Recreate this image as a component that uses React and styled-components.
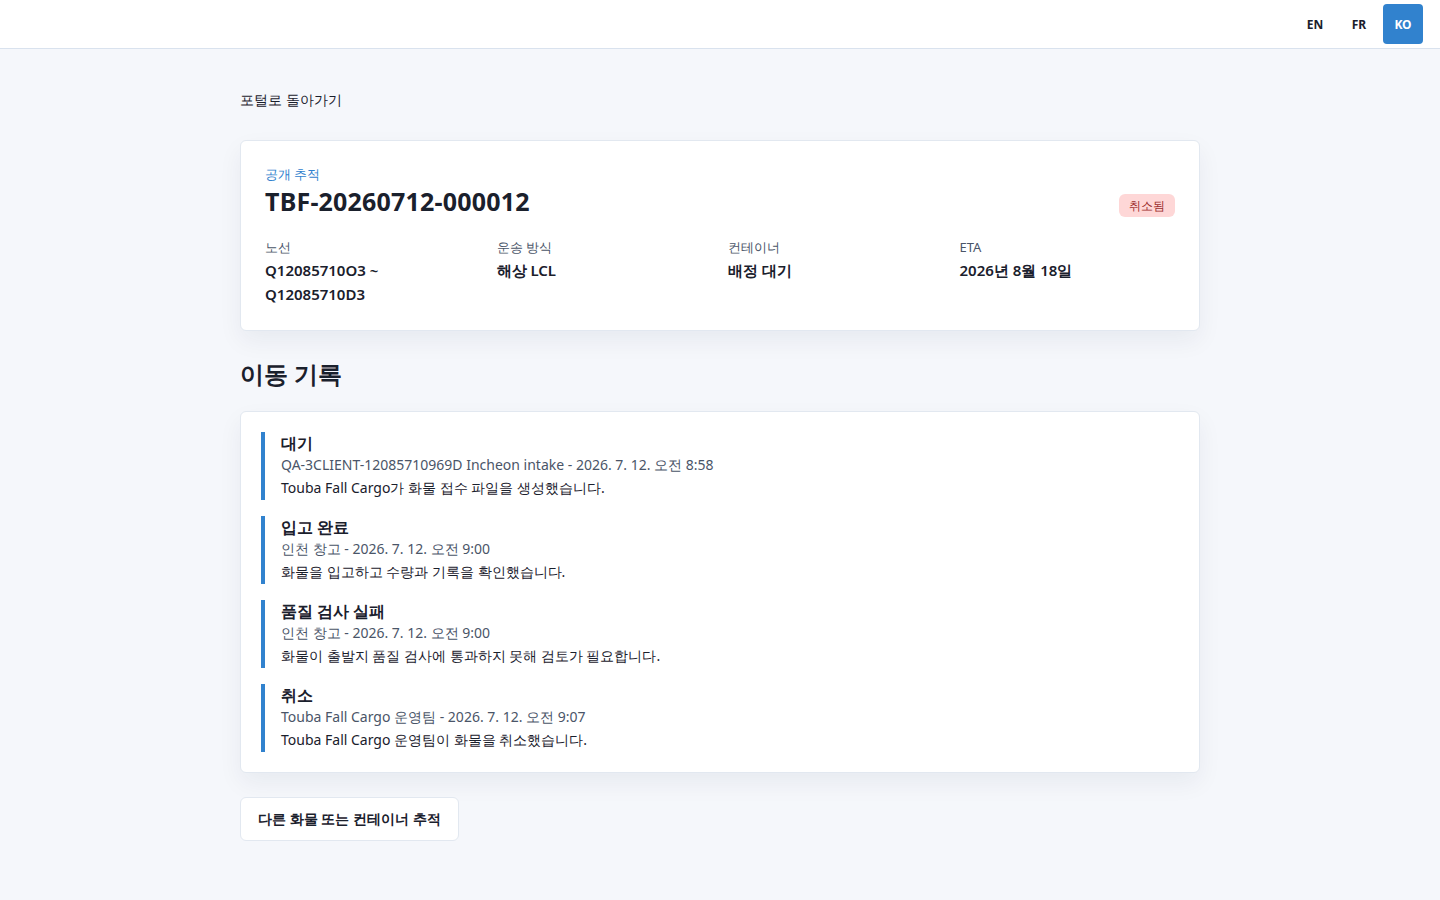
import React from 'react';
import styled, { createGlobalStyle } from 'styled-components';

const GlobalStyle = createGlobalStyle`
  body {
    margin: 0;
    background: #f5f7fb;
    font-family: "Noto Sans", sans-serif;
    color: #1a202c;
  }
  button {
    font: inherit;
  }
`;

const Header = styled.header`
  height: 48px;
  background: #fff;
  border-bottom: 1px solid #d9e2ee;
  display: flex;
  align-items: center;
  justify-content: flex-end;
  padding: 0 17px 0 16px;
  gap: 4px;
`;

const LangButton = styled.button`
  height: 40px;
  min-width: 40px;
  padding: 0 10px;
  border: none;
  border-radius: 4px;
  font-size: 12px;
  font-weight: 700;
  cursor: pointer;
  background: ${p => (p.active ? '#3182ce' : 'transparent')};
  color: ${p => (p.active ? '#fff' : '#1a202c')};
`;

const Main = styled.main`
  width: 960px;
  margin: 0 auto;
  padding: 39px 0 60px;
`;

const BackLink = styled.a`
  display: inline-block;
  font-size: 14px;
  font-weight: 500;
  color: #1a202c;
  text-decoration: none;
  line-height: 24px;
  margin-bottom: 28px;
`;

const Card = styled.section`
  background: #fff;
  border: 1px solid #e2e8f0;
  border-radius: 6px;
  box-shadow: 0 10px 25px rgba(20, 30, 60, 0.06);
  padding: ${p => p.pad || '24px'};
`;

const SummaryTop = styled.div`
  display: flex;
  justify-content: space-between;
  align-items: flex-end;
`;

const Eyebrow = styled.div`
  font-size: 13px;
  color: #3182ce;
  line-height: 19px;
`;

const TrackingId = styled.h1`
  margin: 0;
  font-size: 25px;
  font-weight: 700;
  line-height: 34px;
  letter-spacing: 0.2px;
`;

const Badge = styled.span`
  background: #fed7d7;
  color: #9b2c2c;
  font-size: 12px;
  font-weight: 500;
  padding: 2px 10px;
  border-radius: 6px;
  line-height: 19px;
  margin-bottom: 1px;
`;

const InfoGrid = styled.div`
  display: grid;
  grid-template-columns: repeat(4, 1fr);
  gap: 16px;
  margin-top: 20px;
`;

const Label = styled.div`
  font-size: 13px;
  color: #4a5568;
  line-height: 18px;
`;

const Value = styled.div`
  font-size: 15px;
  font-weight: 600;
  line-height: 24px;
  margin-top: 2px;
`;

const SectionTitle = styled.h2`
  margin: 26px 0 20px;
  font-size: 24px;
  font-weight: 700;
  line-height: 34px;
`;

const Timeline = styled.div`
  display: flex;
  flex-direction: column;
  gap: 16px;
`;

const Event = styled.div`
  border-left: 4px solid #3182ce;
  padding-left: 16px;
`;

const EventTitle = styled.div`
  font-size: 16px;
  font-weight: 600;
  line-height: 22px;
`;

const EventMeta = styled.div`
  font-size: 14px;
  color: #4a5568;
  line-height: 22px;
`;

const EventText = styled.div`
  font-size: 14px;
  line-height: 24px;
  color: #1a202c;
`;

const OutlineButton = styled.button`
  margin-top: 24px;
  height: 44px;
  padding: 0 17px;
  background: #fff;
  border: 1px solid #e2e8f0;
  border-radius: 6px;
  font-size: 14px;
  font-weight: 600;
  color: #1a202c;
  cursor: pointer;
`;

const events = [
  {
    title: '대기',
    meta: 'QA-3CLIENT-12085710969D Incheon intake - 2026. 7. 12. 오전 8:58',
    text: 'Touba Fall Cargo가 화물 접수 파일을 생성했습니다.',
  },
  {
    title: '입고 완료',
    meta: '인천 창고 - 2026. 7. 12. 오전 9:00',
    text: '화물을 입고하고 수량과 기록을 확인했습니다.',
  },
  {
    title: '품질 검사 실패',
    meta: '인천 창고 - 2026. 7. 12. 오전 9:00',
    text: '화물이 출발지 품질 검사에 통과하지 못해 검토가 필요합니다.',
  },
  {
    title: '취소',
    meta: 'Touba Fall Cargo 운영팀 - 2026. 7. 12. 오전 9:07',
    text: 'Touba Fall Cargo 운영팀이 화물을 취소했습니다.',
  },
];

export default function App() {
  return (
    <>
      <GlobalStyle />
      <Header>
        <LangButton>EN</LangButton>
        <LangButton>FR</LangButton>
        <LangButton active>KO</LangButton>
      </Header>
      <Main>
        <BackLink href="#">포털로 돌아가기</BackLink>
        <Card>
          <SummaryTop>
            <div>
              <Eyebrow>공개 추적</Eyebrow>
              <TrackingId>TBF-20260712-000012</TrackingId>
            </div>
            <Badge>취소됨</Badge>
          </SummaryTop>
          <InfoGrid>
            <div>
              <Label>노선</Label>
              <Value>Q12085710O3 ~<br />Q12085710D3</Value>
            </div>
            <div>
              <Label>운송 방식</Label>
              <Value>해상 LCL</Value>
            </div>
            <div>
              <Label>컨테이너</Label>
              <Value>배정 대기</Value>
            </div>
            <div>
              <Label>ETA</Label>
              <Value>2026년 8월 18일</Value>
            </div>
          </InfoGrid>
        </Card>
        <SectionTitle>이동 기록</SectionTitle>
        <Card pad="20px">
          <Timeline>
            {events.map(e => (
              <Event key={e.title}>
                <EventTitle>{e.title}</EventTitle>
                <EventMeta>{e.meta}</EventMeta>
                <EventText>{e.text}</EventText>
              </Event>
            ))}
          </Timeline>
        </Card>
        <OutlineButton>다른 화물 또는 컨테이너 추적</OutlineButton>
      </Main>
    </>
  );
}
